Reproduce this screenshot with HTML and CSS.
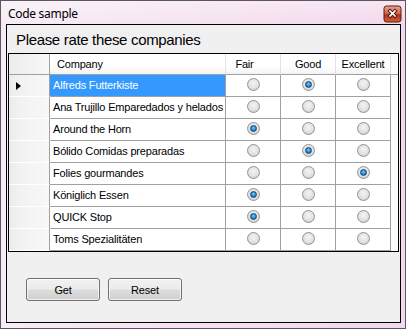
FILE: index.html
```html
<!DOCTYPE html>
<html>
<head>
<meta charset="utf-8">
<link rel="stylesheet" href="styles.css">
</head>
<body>
<div class="window">
  <div class="titlebar">
    <span class="title">Code sample</span>
    <div class="close">
      <svg class="close-x" width="17" height="16" viewBox="0 0 17 16">
        <rect x="0" y="0" width="17" height="16" rx="2.5" fill="url(#closeGrad)" stroke="#5a1a0e" stroke-width="1"/>
        <defs>
          <linearGradient id="closeGrad" x1="0" y1="0" x2="0" y2="1">
            <stop offset="0" stop-color="#e8a490"/>
            <stop offset="0.45" stop-color="#d46a4c"/>
            <stop offset="0.55" stop-color="#b8331a"/>
            <stop offset="1" stop-color="#d0603c"/>
          </linearGradient>
        </defs>
        <path d="M6 5 L11 10 M11 5 L6 10" stroke="#3e120a" stroke-width="3.4" stroke-linecap="square"/>
        <path d="M6 5 L11 10 M11 5 L6 10" stroke="#ffffff" stroke-width="1.7" stroke-linecap="square"/>
      </svg>
    </div>
  </div>
  <div class="client">
    <div class="heading">Please rate these companies</div>
    <div class="grid">
      <div class="hd corner"></div>
      <div class="hd col-company">Company</div>
      <div class="hd col-fair">Fair</div>
      <div class="hd">Good</div>
      <div class="hd">Excellent</div>
      <div class="hd filler"></div>

      <div class="rh"><span class="arrow"></span></div>
      <div class="cell name selected">Alfreds Futterkiste</div>
      <div class="cell opt"><span class="radio"></span></div>
      <div class="cell opt"><span class="radio on"></span></div>
      <div class="cell opt"><span class="radio"></span></div>
      <div class="filler"></div>

      <div class="rh"></div>
      <div class="cell name">Ana Trujillo Emparedados y helados</div>
      <div class="cell opt"><span class="radio"></span></div>
      <div class="cell opt"><span class="radio"></span></div>
      <div class="cell opt"><span class="radio"></span></div>
      <div class="filler"></div>

      <div class="rh"></div>
      <div class="cell name">Around the Horn</div>
      <div class="cell opt"><span class="radio on"></span></div>
      <div class="cell opt"><span class="radio"></span></div>
      <div class="cell opt"><span class="radio"></span></div>
      <div class="filler"></div>

      <div class="rh"></div>
      <div class="cell name">Bólido Comidas preparadas</div>
      <div class="cell opt"><span class="radio"></span></div>
      <div class="cell opt"><span class="radio on"></span></div>
      <div class="cell opt"><span class="radio"></span></div>
      <div class="filler"></div>

      <div class="rh"></div>
      <div class="cell name">Folies gourmandes</div>
      <div class="cell opt"><span class="radio"></span></div>
      <div class="cell opt"><span class="radio"></span></div>
      <div class="cell opt"><span class="radio on"></span></div>
      <div class="filler"></div>

      <div class="rh"></div>
      <div class="cell name">Königlich Essen</div>
      <div class="cell opt"><span class="radio on"></span></div>
      <div class="cell opt"><span class="radio"></span></div>
      <div class="cell opt"><span class="radio"></span></div>
      <div class="filler"></div>

      <div class="rh"></div>
      <div class="cell name">QUICK Stop</div>
      <div class="cell opt"><span class="radio on"></span></div>
      <div class="cell opt"><span class="radio"></span></div>
      <div class="cell opt"><span class="radio"></span></div>
      <div class="filler"></div>

      <div class="rh"></div>
      <div class="cell name">Toms Spezialitäten</div>
      <div class="cell opt"><span class="radio"></span></div>
      <div class="cell opt"><span class="radio"></span></div>
      <div class="cell opt"><span class="radio"></span></div>
      <div class="filler"></div>
    </div>
    <div class="buttons">
      <button class="btn">Get</button>
      <button class="btn">Reset</button>
    </div>
  </div>
</div>
</body>
</html>
```
FILE: styles.css
```css
html, body {
  margin: 0;
  padding: 0;
  background: #ffffff;
}

.window {
  width: 406px;
  height: 329px;
  box-sizing: border-box;
  border: 1px solid #5e5560;
  background: linear-gradient(to right, #f7ecf5 0%, #f5e2f1 50%, #f2d8ec 100%);
  display: flex;
  flex-direction: column;
  font-family: "Liberation Sans", Arial, sans-serif;
  color: #000;
}

.titlebar {
  height: 23px;
  display: flex;
  align-items: center;
  justify-content: space-between;
  padding: 0 4px 0 7px;
  background: linear-gradient(to bottom, rgba(255,255,255,0.35), rgba(255,255,255,0));
}

.title {
  font-family: "Noto Sans", "Liberation Sans", sans-serif;
  font-size: 12px;
  letter-spacing: -0.3px;
  line-height: 16px;
  color: #000;
  padding-top: 2px;
}

.close {
  width: 17px;
  height: 16px;
  margin-top: 3px;
}

.close-x {
  display: block;
  overflow: visible;
}

.client {
  flex: 1;
  margin: 0 4px 5px 5px;
  border: 1px solid #000;
  background: #f0f0f0;
  display: flex;
  flex-direction: column;
}

.heading {
  font-size: 15px;
  letter-spacing: -0.33px;
  line-height: 18px;
  height: 18px;
  padding: 6px 0 0 9px;
}

.grid {
  margin: 4px 1px 0 1px;
  border: 1px solid #000;
  display: grid;
  grid-template-columns: 41px 176px 55px 55px 55px 7px;
  grid-template-rows: 21px repeat(8, 22px);
  background: #fbfbfb;
  font-size: 11px;
  letter-spacing: -0.18px;
}

.hd {
  box-sizing: border-box;
  background: linear-gradient(to bottom, #ffffff 0%, #ffffff 60%, #f3f3f3 100%);
  border-bottom: 1px solid #a0a0a0;
  border-right: 1px solid #e2e2e2;
  display: flex;
  align-items: center;
  justify-content: center;
  line-height: 13px;
}

.hd.corner {
  background: linear-gradient(to right, #ececec, #f8f8f8);
  border-right: 1px solid #a0a0a0;
}

.hd.col-company {
  justify-content: flex-start;
  padding-left: 7px;
}

.hd.col-fair {
  padding-right: 17px;
}

.hd.filler {
  border-right: none;
  background: #fbfbfb;
}

.rh {
  box-sizing: border-box;
  background: linear-gradient(to right, #ebebeb 0%, #f2f2f2 30%, #f8f8f8 100%);
  border-right: 1px solid #a0a0a0;
  border-bottom: 1px solid #ffffff;
  display: flex;
  align-items: center;
  padding-left: 7px;
}

.arrow {
  width: 0;
  height: 0;
  border-left: 5px solid #000;
  border-top: 4px solid transparent;
  border-bottom: 4px solid transparent;
}

.cell {
  box-sizing: border-box;
  background: #ffffff;
  border-right: 1px solid #a0a0a0;
  border-bottom: 1px solid #a0a0a0;
}

.cell.name {
  display: flex;
  align-items: center;
  padding-left: 3px;
  white-space: nowrap;
  overflow: hidden;
  line-height: 13px;
}

.cell.selected {
  background: #3399ff;
  color: #ffffff;
}

.cell.opt {
  display: flex;
  justify-content: center;
  align-items: flex-start;
  padding-top: 3px;
}

.filler {
  background: #fbfbfb;
}

.radio {
  display: block;
  width: 13px;
  height: 13px;
  box-sizing: border-box;
  border-radius: 50%;
  border: 1px solid #939393;
  background: radial-gradient(circle at 50% 40%, #f4f4f4 0%, #e2e2e2 55%, #d0d0d0 80%, #fafafa 100%);
  position: relative;
}

.radio.on::after {
  content: "";
  position: absolute;
  left: 2px;
  top: 2px;
  width: 7px;
  height: 7px;
  box-sizing: border-box;
  border-radius: 50%;
  border: 1px solid #1c4a78;
  background: radial-gradient(circle at 50% 40%, #8fd6fb 0%, #2a8fd6 45%, #0c5594 100%);
}

.buttons {
  display: flex;
  gap: 8px;
  padding: 26px 0 0 19px;
}

.btn {
  width: 74px;
  height: 23px;
  box-sizing: border-box;
  border: 1px solid #707070;
  border-radius: 3px;
  background: linear-gradient(to bottom, #f2f2f2 0%, #ebebeb 48%, #dddddd 52%, #cfcfcf 100%);
  font-family: "Liberation Sans", Arial, sans-serif;
  font-size: 11px;
  letter-spacing: -0.18px;
  color: #000;
  padding: 0;
  margin: 0;
  box-shadow: inset 0 0 0 1px rgba(255,255,255,0.7);
}
```
